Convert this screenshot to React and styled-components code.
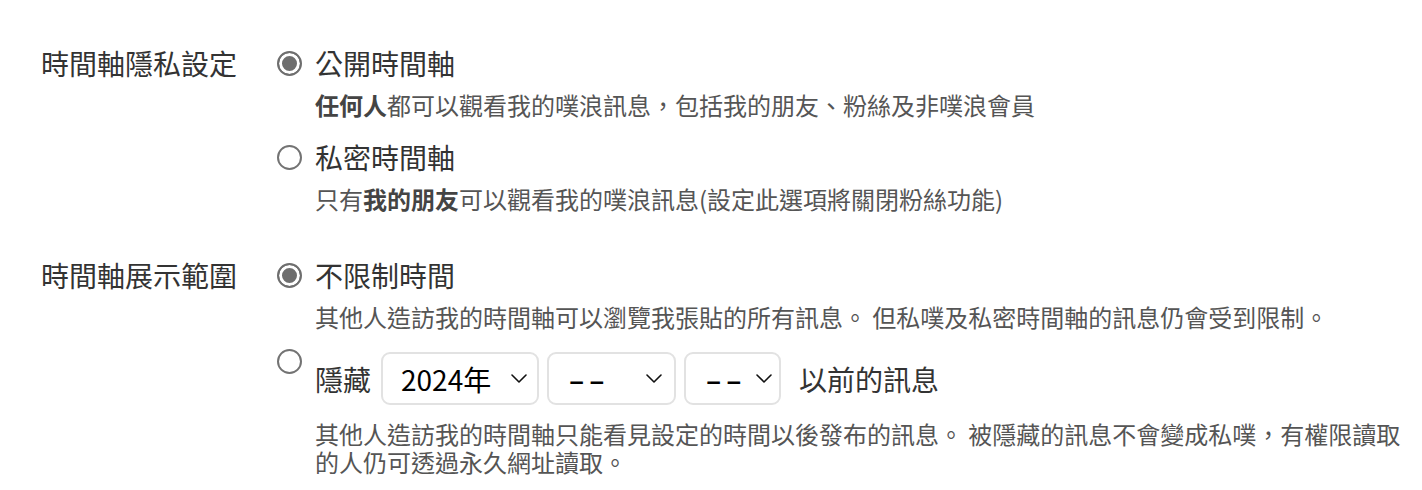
import styled, { createGlobalStyle } from 'styled-components';
import { useState } from 'react';

const GlobalStyle = createGlobalStyle`
    html, body {
        margin: 0;
        background: #fff;
    }
    body {
        font-family: "Noto Sans CJK TC", "Noto Sans", sans-serif;
        color: #333;
    }
`

const Page = styled.div`
    padding: 43px 10px 20px 41px;
    display: flex;
    flex-direction: column;
    gap: 42px;
`

const Section = styled.div`
    display: grid;
    grid-template-columns: 236px 1fr;
`

const Label = styled.div`
    font-size: 28px;
    line-height: 40px;
    color: #333;
`

const Options = styled.div`
    display: flex;
    flex-direction: column;
    gap: 18px;
`

const Option = styled.label`
    display: flex;
    align-items: flex-start;
    gap: 13px;
    cursor: pointer;
`

const Radio = styled.input`
    appearance: none;
    flex: none;
    width: 25px;
    height: 25px;
    margin: ${p => p.$offset}px 0 0 0;
    border-radius: 50%;
    border: 2px solid #737373;
    background: #fff;
    box-sizing: border-box;
    cursor: pointer;

    &:checked {
        border: 2px solid #6e6e6e;
        background: #6e6e6e;
        box-shadow: inset 0 0 0 3px #fff;
    }
`

const Body = styled.div`
    display: flex;
    flex-direction: column;
    min-width: 0;
`

const Title = styled.div`
    font-size: 28px;
    line-height: 40px;
    color: #333;
`

const Desc = styled.div`
    margin-top: ${p => p.$gap}px;
    font-size: 24px;
    line-height: 28px;
    color: #555;

    b {
        font-weight: 700;
        color: #444;
    }
`

const DateRow = styled.div`
    display: flex;
    align-items: center;
    padding-top: 3px;
    font-size: 28px;
    color: #333;
`

const Hide = styled.span`
    margin-right: 10px;
`

const Selects = styled.div`
    display: flex;
    gap: 8px;
`

const SelectBox = styled.div`
    display: flex;
    align-items: center;
    width: ${p => p.$w}px;
    height: 53px;
    box-sizing: border-box;
    border: 2px solid #e2e2e2;
    border-radius: 9px;
    padding-right: ${p => p.$pr}px;
    background: #fff;
`

const Select = styled.select`
    appearance: none;
    flex: 1;
    min-width: 0;
    height: 100%;
    border: none;
    outline: none;
    background: transparent;
    padding: 0 0 0 ${p => p.$pl}px;
    font-family: "Noto Sans CJK TC", "Noto Sans", sans-serif;
    font-size: 28px;
    font-weight: ${p => p.$bold ? 700 : 400};
    letter-spacing: ${p => p.$ls || 0}px;
    color: #000;
    cursor: pointer;
`

const Chevron = () => (
    <svg width="16" height="9" viewBox="0 0 16 9" fill="none">
        <path d="M1 1l7 7 7-7" stroke="#111" strokeWidth="1.6" strokeLinecap="round" strokeLinejoin="round" />
    </svg>
)

const After = styled.span`
    margin-left: 18px;
`

const App = () => {
    const [privacy, setPrivacy] = useState("public");
    const [range, setRange] = useState("all");

    return (
        <Page>
            <GlobalStyle />
            <Section>
                <Label>時間軸隱私設定</Label>
                <Options>
                    <Option>
                        <Radio type="radio" name="privacy" $offset={8}
                            checked={privacy === "public"} onChange={() => setPrivacy("public")} />
                        <Body>
                            <Title>公開時間軸</Title>
                            <Desc $gap={8}><b>任何人</b>都可以觀看我的噗浪訊息，包括我的朋友、粉絲及非噗浪會員</Desc>
                        </Body>
                    </Option>
                    <Option>
                        <Radio type="radio" name="privacy" $offset={8}
                            checked={privacy === "private"} onChange={() => setPrivacy("private")} />
                        <Body>
                            <Title>私密時間軸</Title>
                            <Desc $gap={8}>只有<b>我的朋友</b>可以觀看我的噗浪訊息(設定此選項將關閉粉絲功能)</Desc>
                        </Body>
                    </Option>
                </Options>
            </Section>
            <Section>
                <Label>時間軸展示範圍</Label>
                <Options>
                    <Option>
                        <Radio type="radio" name="range" $offset={8}
                            checked={range === "all"} onChange={() => setRange("all")} />
                        <Body>
                            <Title>不限制時間</Title>
                            <Desc $gap={8}>其他人造訪我的時間軸可以瀏覽我張貼的所有訊息。 但私噗及私密時間軸的訊息仍會受到限制。</Desc>
                        </Body>
                    </Option>
                    <Option as="div">
                        <Radio type="radio" name="range" $offset={0}
                            checked={range === "hide"} onChange={() => setRange("hide")} />
                        <Body>
                            <DateRow>
                                <Hide>隱藏</Hide>
                                <Selects>
                                    <SelectBox $w={158} $pr={10}>
                                        <Select $pl={18} defaultValue="2024">
                                            <option value="2024">2024年</option>
                                            <option value="2023">2023年</option>
                                            <option value="2022">2022年</option>
                                        </Select>
                                        <Chevron />
                                    </SelectBox>
                                    <SelectBox $w={129} $pr={12}>
                                        <Select $pl={20} $ls={5} $bold defaultValue="">
                                            <option value="">––</option>
                                            <option value="1">1月</option>
                                            <option value="6">6月</option>
                                            <option value="12">12月</option>
                                        </Select>
                                        <Chevron />
                                    </SelectBox>
                                    <SelectBox $w={97} $pr={7}>
                                        <Select $pl={20} $ls={5} $bold defaultValue="">
                                            <option value="">––</option>
                                            <option value="1">1日</option>
                                            <option value="15">15日</option>
                                        </Select>
                                        <Chevron />
                                    </SelectBox>
                                </Selects>
                                <After>以前的訊息</After>
                            </DateRow>
                            <Desc $gap={15}>其他人造訪我的時間軸只能看見設定的時間以後發布的訊息。 被隱藏的訊息不會變成私噗，有權限讀取的人仍可透過永久網址讀取。</Desc>
                        </Body>
                    </Option>
                </Options>
            </Section>
        </Page>
    )
}

export default App
